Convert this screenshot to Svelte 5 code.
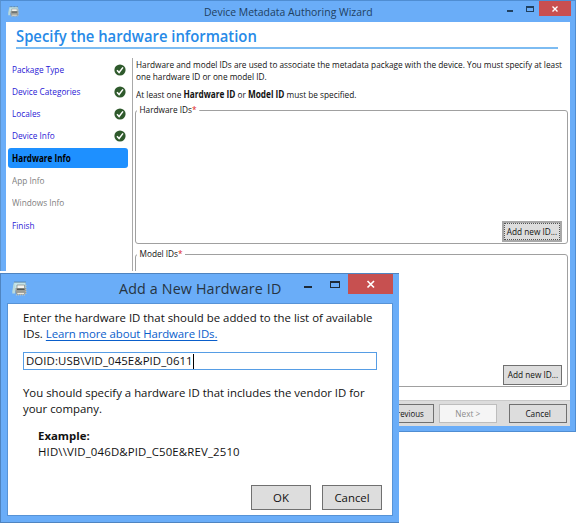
<script>
  const steps = [
    { label: 'Package Type', state: 'done' },
    { label: 'Device Categories', state: 'done' },
    { label: 'Locales', state: 'done' },
    { label: 'Device Info', state: 'done' },
    { label: 'Hardware Info', state: 'current' },
    { label: 'App Info', state: 'disabled' },
    { label: 'Windows Info', state: 'disabled' },
    { label: 'Finish', state: 'open' }
  ];
  let hardwareId = 'DOID:USB\\VID_045E&PID_0611';
</script>

{#snippet deviceIcon()}
  <svg class="device" viewBox="0 0 15 15" aria-hidden="true">
    <path d="M2 1.5h11.5v8H1z" fill="#c3e3e9" stroke="#9fbfca" stroke-width=".6" />
    <path d="M2.5 1h11" stroke="#4b6a78" stroke-dasharray="1 1" />
    <path d="M.3 10.5l1.2-7h1.5v9H.3z" fill="#b9d9dc" />
    <path d="M5 4h7.5v4H5z" fill="#f4f4ef" stroke="#8a9290" stroke-width=".8" />
    <path d="M3.5 7h10.5v5.5H3.5z" fill="#9a9d98" />
    <path d="M5 8.3h7.5" stroke="#4d5352" stroke-width="1.3" />
    <path d="M5 11.5h7.5v2H5z" fill="#eeeade" stroke="#8b8c84" stroke-width=".6" />
    <path d="M14 4v9M4 14h10" stroke="#c9c5b0" stroke-dasharray="1 1" />
  </svg>
{/snippet}

<div class="screen">
  <section class="wizard">
    <header class="bar">
      <span class="appicon">{@render deviceIcon()}</span>
      <span class="caption"><span class="t">Device Metadata Authoring Wizard</span></span>
      <svg class="controls" viewBox="0 0 66 15" shape-rendering="crispEdges">
        <path d="M1 9h6v2H1z" fill="#20405f" />
        <path d="M20.5 5.5h7v5h-7zM20 6.5h8" fill="none" stroke="#20405f" />
        <path d="M33 0h32v15H33z" fill="#c94f50" />
        <path d="M46.5 5.5l5 5m0-5l-5 5" stroke="#fff" stroke-width="1.4" shape-rendering="auto" />
      </svg>
    </header>
    <div class="client">
      <h1><span class="t">Specify the hardware information</span></h1>
      <div class="columns">
        <nav>
          {#each steps as step}
            <div class="step {step.state}">
              <span class="t">{step.label}</span>
              {#if step.state === 'done'}
                <svg class="tick" viewBox="0 0 12 12">
                  <circle cx="6" cy="6" r="5.6" fill="#2f5a2c" />
                  <path d="M3 6.2l2.1 2.3L9 3.4" fill="none" stroke="#fff" stroke-width="1.5" />
                </svg>
              {/if}
            </div>
          {/each}
        </nav>
        <main>
          <p class="intro"><span class="t">Hardware and model IDs are used to associate the metadata package with the device. You must specify at least</span><br /><span class="t">one hardware ID or one model ID.</span></p>
          <p class="rule"><span class="t">At least one <b>Hardware ID</b> or <b>Model ID</b> must be specified.</span></p>
          <div class="group first">
            <span class="legend t">Hardware IDs<i>*</i></span>
            <button class="add focus"><span class="ring"><span class="t">Add new ID...</span></span></button>
          </div>
          <div class="group second">
            <span class="legend t">Model IDs<i>*</i></span>
            <button class="add"><span class="t">Add new ID...</span></button>
          </div>
        </main>
      </div>
      <footer>
        <button class="prev"><span class="t">&lt; Previous</span></button>
        <button class="next" disabled><span class="t">Next &gt;</span></button>
        <button class="cancel"><span class="t">Cancel</span></button>
      </footer>
    </div>
  </section>

  <section class="dialog">
    <header class="dbar">
      <span class="dicon">{@render deviceIcon()}</span>
      <span class="dcaption">Add a New Hardware ID</span>
      <svg class="dcontrols" viewBox="0 0 90 20" shape-rendering="crispEdges">
        <path d="M1 12h8v2H1z" fill="#1d2a38" />
        <path d="M27.5 7.5h9v6h-9zM27 8h10" fill="none" stroke="#1d2a38" />
        <path d="M45 0h45v20H45z" fill="#c75050" />
        <path d="M64.5 7l6.5 6.5m0-6.5l-6.5 6.5" stroke="#fff" stroke-width="1.7" shape-rendering="auto" />
      </svg>
    </header>
    <div class="dclient">
      <p>Enter the hardware ID that should be added to the list of available<br />IDs. <a href="#learn">Learn more about Hardware IDs.</a></p>
      <div class="field"><span class="entry">{hardwareId}</span><span class="caret"></span></div>
      <p class="note">You should specify a hardware ID that includes the vendor ID for<br />your company.</p>
      <div class="example"><b>Example:</b><br /><span class="code">HID\\VID_046D&amp;PID_C50E&amp;REV_2510</span></div>
      <div class="actions"><button>OK</button><button>Cancel</button></div>
    </div>
  </section>
</div>

<style>
  :global(body) { background: #fff; overflow: hidden; }
  * { box-sizing: border-box; }
  .screen { position: relative; width: 577px; height: 525px; background: #fff; overflow: hidden; font-family: "Open Sans", "Noto Sans", sans-serif; color: #111; }
  .t { display: inline-block; white-space: nowrap; transform: scaleX(.842); transform-origin: left; }
  p, h1 { margin: 0; }
  button { font: inherit; color: #111; padding: 0; margin: 0; border: 1px solid #707070; background: #ddd; border-radius: 0; white-space: nowrap; display: flex; justify-content: center; align-items: center; }
  button .t { transform-origin: center; }
  svg { display: block; }
  .wizard { width: 576px; height: 432px; background: #6aadf8; border: 1px solid #4f8dd2; border-left-color: #5b93cf; padding: 0 5px 5px; font-size: 9.8px; line-height: 12px; }
  .bar { height: 21px; display: flex; }
  .appicon { width: 14px; padding: 5px 0 0 2px; flex: none; }
  .appicon .device { width: 11px; height: 11px; }
  .caption { flex: 1; padding: 4px 0 0 184px; font-size: 11.1px; line-height: 14px; color: #20405f; }
  .caption .t { transform: scaleX(.94); }
  .controls { width: 66px; height: 15px; margin-right: -2px; flex: none; }
  .client { height: 404px; background: #fff; display: flex; flex-direction: column; }
  h1 { margin: 0 12px 0 10px; height: 27px; flex: none; border-bottom: 2px solid #7dbcf2; font-size: 15.8px; line-height: 28px; font-weight: 600; color: #278ae7; }
  h1 .t { transform: scaleX(.938); }
  .columns { flex: 1; display: flex; padding-top: 9px; min-height: 0; }
  nav { width: 127px; border-right: 1px solid #a9a9a9; padding: 1px 0 0 2px; flex: none; }
  .step { width: 120px; height: 20px; margin-bottom: 2.34px; padding: 1px 2px 0 4px; display: flex; justify-content: space-between; align-items: center; color: #2a20d5; }
  .step.current { background: #1e90ff; border-radius: 3px; color: #000; font-weight: 700; }
  .step.current .t { transform: scaleX(.83); }
  .step.disabled { color: #808080; }
  .tick { width: 12px; height: 12px; }
  main { flex: 1; min-width: 0; padding: 1px 0 0 2px; }
  .intro { padding-left: 1px; }
  .rule { margin-top: 6px; padding-left: 1px; }
  .group { width: 433px; height: 134px; border: 1px solid #a0a0a0; border-radius: 3px; display: flex; flex-direction: column; justify-content: space-between; align-items: flex-end; }
  .first { margin-top: 9px; }
  .second { margin-top: 10px; height: 133px; }
  .legend { align-self: flex-start; margin: -7px 0 0 1px; padding: 0 3px; background: #fff; line-height: 12px; }
  .legend i { color: #d22; font-style: normal; }
  .add { width: 59px; height: 20px; margin: 0 5px 1px 0; }
  .focus { width: 60px; height: 21px; border: 2px solid #a8a8a8; }
  .ring { width: 100%; height: 100%; border: 1px dotted #555; display: flex; justify-content: center; align-items: center; }
  footer { height: 26px; background: #dcdcdc; border-top: 1px solid #c9c9c9; display: flex; justify-content: flex-end; padding: 3px 3px 3px 0; flex: none; }
  footer button { width: 58px; height: 19px; }
  .prev .t { transform: scaleX(.8); }
  .next { margin: 0 12px 0 5px; background: #f5f5f5; border-color: #bdbdbd; color: #8c8c8c; }

  .dialog { position: absolute; left: 0; top: 271px; width: 399px; height: 252px; border-top: 2px solid #fff; display: flex; flex-direction: column; background: #6aadf8; box-shadow: inset 1px 1px #4f84c0, inset 0 -1px #4f84c0; }
  .dbar { height: 30px; display: flex; flex: none; padding-top: 1px; }
  .dicon { padding: 7px 0 0 12px; width: 119px; flex: none; }
  .dicon .device { width: 15px; height: 15px; }
  .dcaption { flex: 1; font-size: 14.3px; line-height: 30px; letter-spacing: .14px; color: #263442; white-space: nowrap; }
  .dcontrols { width: 90px; height: 20px; margin-right: 6px; flex: none; }
  .dclient { margin: 0 6px 7px 7px; border: 1px solid #5793d6; background: #fff; height: 213px; padding: 6px 15px 8px; font-size: 11.4px; line-height: 16px; color: #111; white-space: nowrap; }
  a { color: #0a5ecb; text-underline-offset: 2px; letter-spacing: -.09px; }
  .code { letter-spacing: .16px; }
  .entry { letter-spacing: .09px; }
  .field { margin-top: 10px; width: 354px; height: 18px; border: 1px solid #569de5; display: flex; padding-left: 2px; align-items: center; }
  .caret { width: 1px; height: 15px; background: #000; }
  .note { margin-top: 15px; }
  .example { margin: 11px 0 0 15px; }
  .actions { display: flex; justify-content: flex-end; gap: 11px; margin: 25px -5px 0 0; }
  .actions button { width: 60px; height: 25px; }
</style>
